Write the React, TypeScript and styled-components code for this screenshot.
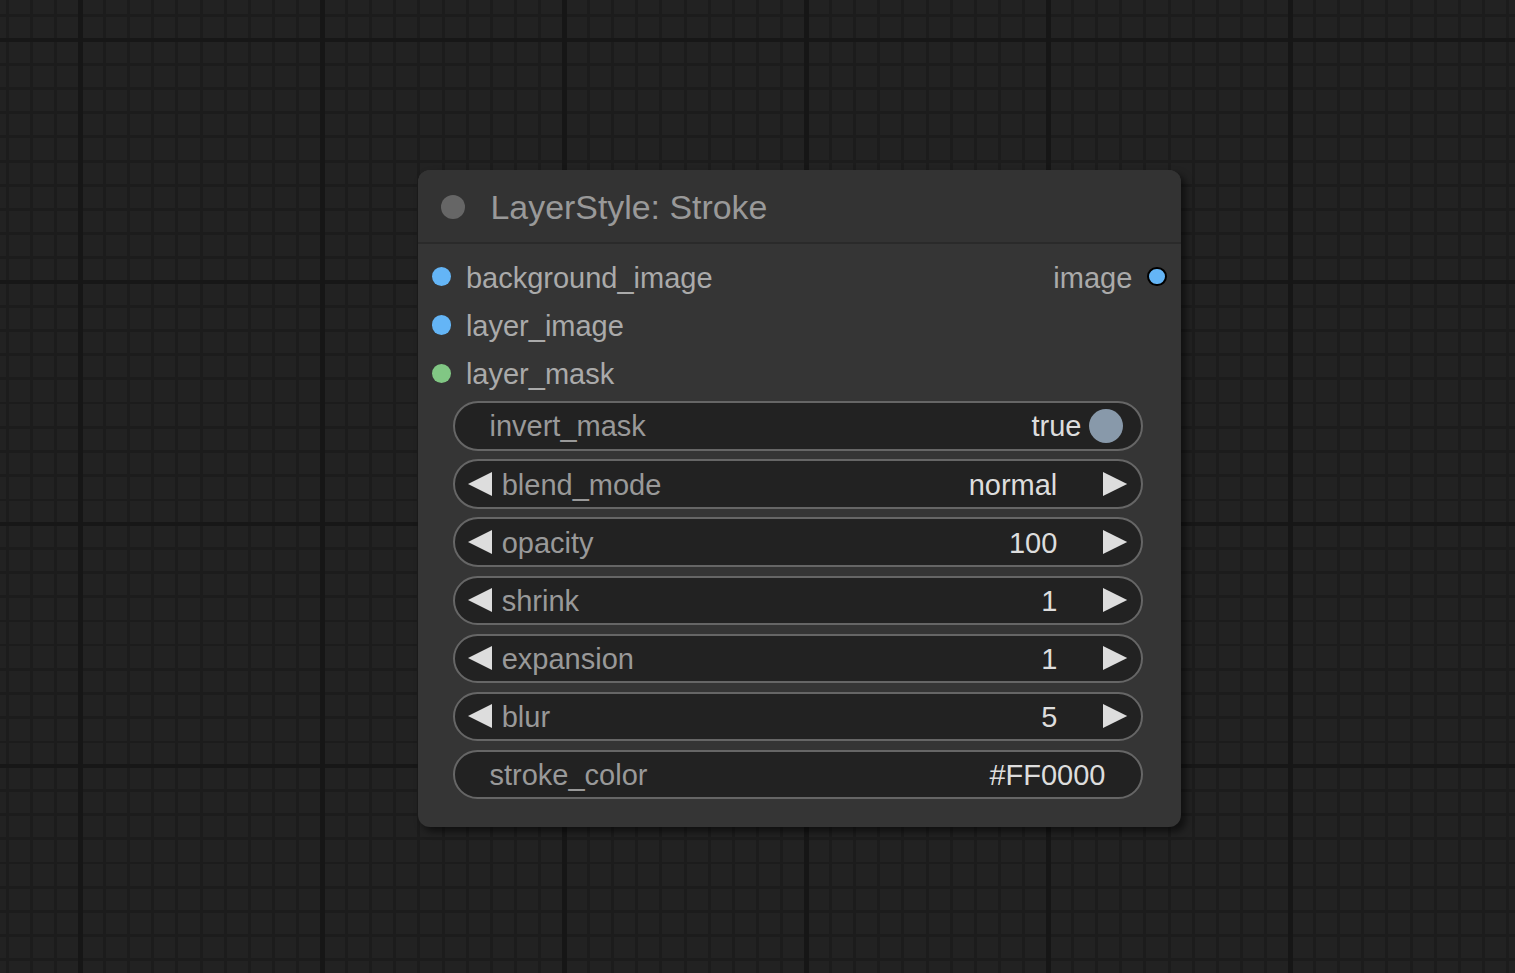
import React from "react";
import styled, { createGlobalStyle } from "styled-components";

const GlobalStyle = createGlobalStyle`
  html, body {
    margin: 0;
    padding: 0;
    height: 100%;
  }
  html {
    background-color: #222222;
    background-image:
      repeating-linear-gradient(to right, transparent 0 78px, #161616 78px 83px, transparent 83px 242px),
      repeating-linear-gradient(to bottom, transparent 0 38px, #171717 38px 42px, transparent 42px 242px),
      repeating-linear-gradient(to right, transparent 0 6px, #1c1c1c 6px 9px, transparent 9px 24.2px),
      repeating-linear-gradient(to bottom, transparent 0 14.5px, #1c1c1c 14.5px 17.3px, transparent 17.3px 24.2px);
  }
  body {
    font-family: "Liberation Sans", Arial, sans-serif;
    overflow: hidden;
  }
`;

const Canvas = styled.div`
  position: relative;
  width: 100vw;
  height: 100vh;
  overflow: hidden;
`;

const Node = styled.div`
  position: absolute;
  left: 417.5px;
  top: 170px;
  width: 763px;
  box-sizing: border-box;
  display: flex;
  flex-direction: column;
  background: #353535;
  border-radius: 12px;
  box-shadow: 4.8px 4.8px 7.3px rgba(0, 0, 0, 0.5);
  padding-bottom: 27.7px;
`;

const TitleBar = styled.div`
  height: 74px;
  box-sizing: border-box;
  display: flex;
  align-items: center;
  padding-left: 23.5px;
  gap: 25.5px;
  background: #333333;
  border-radius: 12px 12px 0 0;
  border-bottom: 2.5px solid #2a2a2a;
`;

const TitleDot = styled.span`
  width: 24px;
  height: 24px;
  border-radius: 50%;
  background: #666666;
  flex: none;
  margin-top: 1px;
`;

const TitleText = styled.span`
  font-size: 33.9px;
  color: #999999;
  white-space: nowrap;
  padding-top: 3px;
`;

const Slots = styled.div`
  display: flex;
  flex-direction: column;
  padding-top: 8.5px;
`;

const SlotRow = styled.div`
  height: 48.4px;
  display: flex;
  align-items: center;
  justify-content: space-between;
  padding: 0 13.8px 0 14px;
`;

const SlotSide = styled.div`
  display: flex;
  align-items: center;
  gap: 15px;
`;

const Dot = styled.span<{ $color: string; $outlined?: boolean }>`
  width: 19.4px;
  height: 19.4px;
  box-sizing: border-box;
  border-radius: 50%;
  background: ${(p) => p.$color};
  border: ${(p) => (p.$outlined ? "2.2px solid #000" : "none")};
  flex: none;
`;

const SlotLabel = styled.span`
  font-size: 29px;
  color: #aaaaaa;
  white-space: nowrap;
  padding-top: 3px;
`;

const WidgetList = styled.div`
  display: flex;
  flex-direction: column;
  gap: 8.7px;
  padding: 3.6px 38px 0 35px;
`;

type Kind = "toggle" | "number" | "text";

const Widget = styled.div<{ $kind: Kind }>`
  height: 49.4px;
  box-sizing: border-box;
  display: flex;
  align-items: center;
  background: #222222;
  border: 2.4px solid #666666;
  border-radius: 25px;
  padding-left: ${(p) => (p.$kind === "number" ? "13px" : "35px")};
  padding-right: ${(p) =>
    p.$kind === "number" ? "13px" : p.$kind === "toggle" ? "17.5px" : "35px"};
`;

const WidgetLabel = styled.span<{ $afterArrow?: boolean }>`
  font-size: 29px;
  color: #999999;
  white-space: nowrap;
  padding-top: 2px;
  margin-left: ${(p) => (p.$afterArrow ? "10px" : "0")};
`;

const WidgetValue = styled.span<{ $gap: number }>`
  font-size: 29px;
  color: #dddddd;
  white-space: nowrap;
  padding-top: 2px;
  margin-left: auto;
  margin-right: ${(p) => p.$gap}px;
`;

const Knob = styled.span`
  width: 34px;
  height: 34px;
  border-radius: 50%;
  background: #8899aa;
  flex: none;
`;

const ArrowSvg = styled.svg`
  width: 24.2px;
  height: 24px;
  flex: none;
  display: block;
`;

const Arrow = ({ dir }: { dir: "left" | "right" }) => (
  <ArrowSvg viewBox="0 0 24.2 24">
    <polygon
      fill="#dddddd"
      points={dir === "left" ? "24.2,0 0,12 24.2,24" : "0,0 24.2,12 0,24"}
    />
  </ArrowSvg>
);

const inputs = [
  { name: "background_image", color: "#64b5f6" },
  { name: "layer_image", color: "#64b5f6" },
  { name: "layer_mask", color: "#81c784" },
];

const numbers = [
  { name: "blend_mode", value: "normal" },
  { name: "opacity", value: "100" },
  { name: "shrink", value: "1" },
  { name: "expansion", value: "1" },
  { name: "blur", value: "5" },
];

export default function App() {
  return (
    <>
      <GlobalStyle />
      <Canvas>
        <Node>
          <TitleBar>
            <TitleDot />
            <TitleText>LayerStyle: Stroke</TitleText>
          </TitleBar>
          <Slots>
            {inputs.map((s, i) => (
              <SlotRow key={s.name}>
                <SlotSide>
                  <Dot $color={s.color} />
                  <SlotLabel>{s.name}</SlotLabel>
                </SlotSide>
                {i === 0 && (
                  <SlotSide>
                    <SlotLabel>image</SlotLabel>
                    <Dot $color="#64b5f6" $outlined />
                  </SlotSide>
                )}
              </SlotRow>
            ))}
          </Slots>
          <WidgetList>
            <Widget $kind="toggle">
              <WidgetLabel>invert_mask</WidgetLabel>
              <WidgetValue $gap={7.5}>true</WidgetValue>
              <Knob />
            </Widget>
            {numbers.map((w) => (
              <Widget $kind="number" key={w.name}>
                <Arrow dir="left" />
                <WidgetLabel $afterArrow>{w.name}</WidgetLabel>
                <WidgetValue $gap={46}>{w.value}</WidgetValue>
                <Arrow dir="right" />
              </Widget>
            ))}
            <Widget $kind="text">
              <WidgetLabel>stroke_color</WidgetLabel>
              <WidgetValue $gap={0}>#FF0000</WidgetValue>
            </Widget>
          </WidgetList>
        </Node>
      </Canvas>
    </>
  );
}
